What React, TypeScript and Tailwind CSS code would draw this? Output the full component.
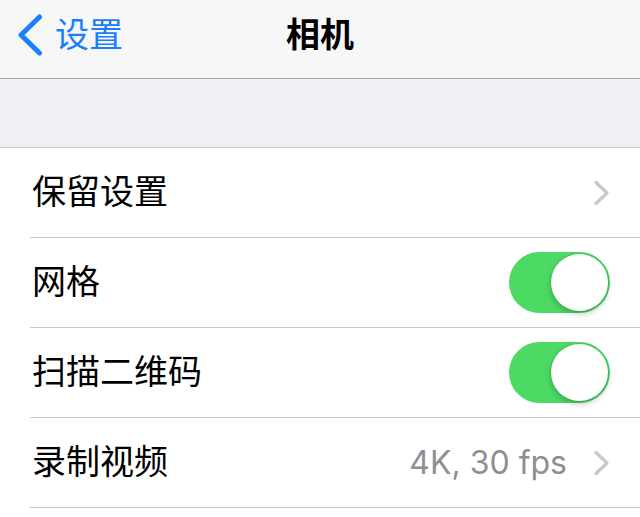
import React, { useState } from 'react';

type RowProps = {
    label: string;
    children?: React.ReactNode;
};

function Chevron() {
    return (
        <svg width="17" height="26" viewBox="0 0 17 26" className="shrink-0">
            <path
                d="M3 2.5 L14 13 L3 23.5"
                fill="none"
                stroke="#c7c7cc"
                strokeWidth="3.2"
                strokeLinecap="round"
                strokeLinejoin="round"
            />
        </svg>
    );
}

function Toggle({ on, onClick }: { on: boolean; onClick: () => void }) {
    return (
        <button
            onClick={onClick}
            className={`relative w-[101px] h-[61px] rounded-full shrink-0 ${
                on ? 'bg-[#4cd964]' : 'bg-[#e5e5ea]'
            }`}
        >
            <span
                className={`absolute top-[2px] w-[57px] h-[57px] rounded-full bg-white shadow-[0_3px_6px_rgba(0,0,0,0.22),0_0_0_1px_rgba(0,0,0,0.06)] ${
                    on ? 'right-[2px]' : 'left-[2px]'
                }`}
            />
        </button>
    );
}

function Row({ label, children }: RowProps) {
    return (
        <div className="ml-[30px] h-[90px] border-b border-[#c8c7cc] flex items-center justify-between pl-[2px] pr-[30px]">
            <span className="text-[34px] text-black leading-none mb-[5px]">{label}</span>
            <div className="flex items-center gap-[26px]">{children}</div>
        </div>
    );
}

export default function App() {
    const [grid, setGrid] = useState<boolean>(true);
    const [scanQr, setScanQr] = useState<boolean>(true);

    return (
        <div
            className="w-[640px] h-[517px] bg-white overflow-hidden"
            style={{ fontFamily: '"Noto Sans CJK SC", "Noto Sans", sans-serif' }}
        >
            <div className="h-[79px] bg-[#f7f7f8] border-b border-[#a9a9ad] grid grid-cols-3 items-center pb-[12px]">
                <div className="flex items-center pl-[17px] gap-[12px] text-[#1a7ffb] mt-[4px]">
                    <svg width="26" height="42" viewBox="0 0 26 42">
                        <path
                            d="M22.5 3 L4 21 L22.5 39"
                            fill="none"
                            stroke="#1a7ffb"
                            strokeWidth="5"
                            strokeLinecap="round"
                            strokeLinejoin="round"
                        />
                    </svg>
                    <span className="text-[34px] leading-none mb-[4px]">设置</span>
                </div>
                <div className="text-center text-[34px] font-bold text-black leading-none">
                    相机
                </div>
                <div />
            </div>

            <div className="h-[69px] bg-[#efeff4] border-b border-[#c8c7cc]" />

            <Row label="保留设置">
                <Chevron />
            </Row>
            <Row label="网格">
                <Toggle on={grid} onClick={() => setGrid(!grid)} />
            </Row>
            <Row label="扫描二维码">
                <Toggle on={scanQr} onClick={() => setScanQr(!scanQr)} />
            </Row>
            <Row label="录制视频">
                <span
                    className="text-[32px] text-[#8e8e93] leading-none"
                    style={{ fontFamily: 'Inter, "Liberation Sans", sans-serif' }}
                >
                    4K, 30 fps
                </span>
                <Chevron />
            </Row>
        </div>
    );
}
